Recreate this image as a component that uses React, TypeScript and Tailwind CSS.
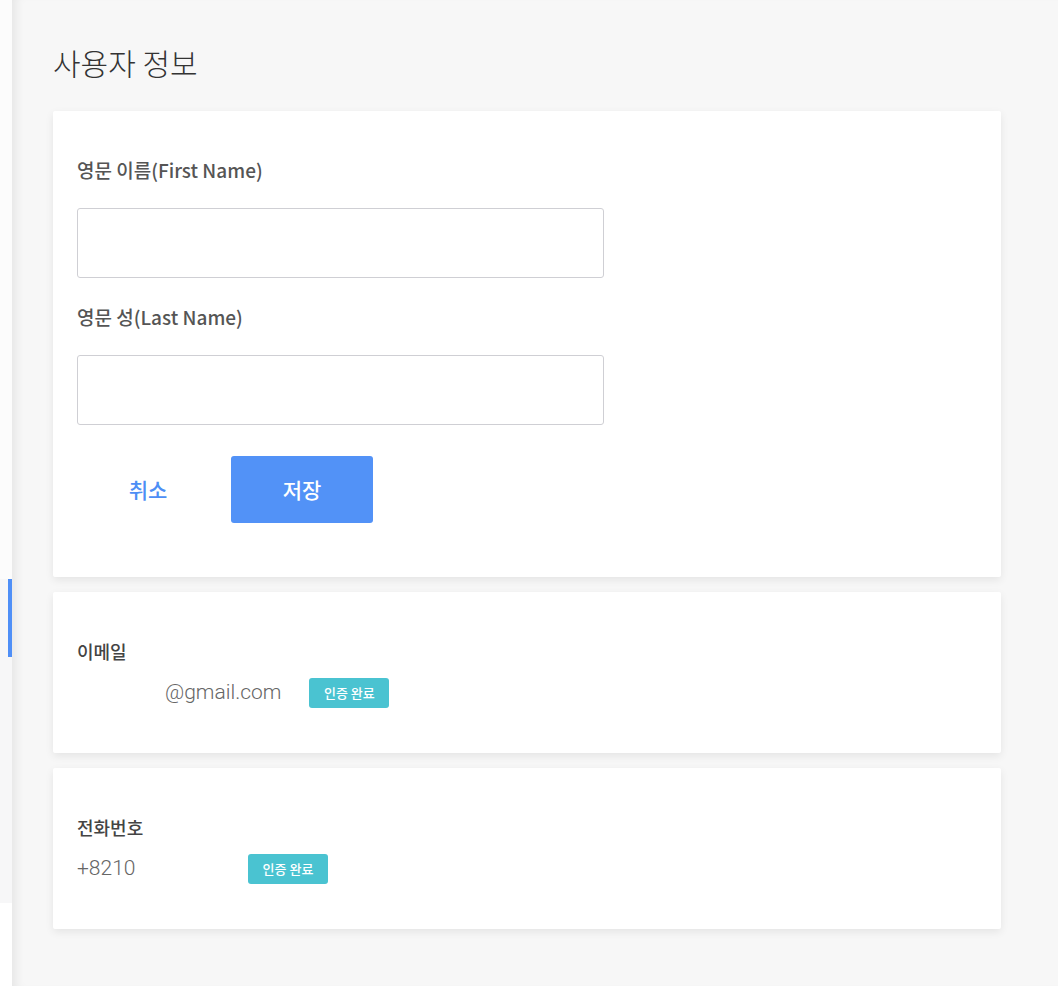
import React from "react";

const ko = "font-['Noto_Sans_CJK_KR','Noto_Sans',sans-serif]";
const roboto = "font-['Roboto','Noto_Sans_CJK_KR',sans-serif]";

function Badge() {
  return (
    <span className={`${ko} inline-flex h-[30px] w-[80px] items-center justify-center rounded-[3px] bg-[#4ac3d1] text-[13px] font-medium text-white`}>
      인증 완료
    </span>
  );
}

function Field({ label }: { label: string }) {
  return (
    <div className="flex flex-col">
      <label className={`${ko} text-[19px] font-medium leading-[24px] text-[#555]`}>{label}</label>
      <input
        type="text"
        className="mt-[26px] h-[70px] w-[527px] rounded-[3px] border border-[#cfcfd4] bg-white px-4 outline-none"
      />
    </div>
  );
}

export default function App() {
  return (
    <div className="flex min-h-[986px] w-full bg-white">
      {/* 사이드바 끝 부분 */}
      <aside className="flex w-3 shrink-0 flex-col">
        <div className="h-[579px] bg-[#fcfcfc]" />
        <div className="flex h-[324px] justify-end bg-[#f7f7f8]">
          <div className="h-[78px] w-1 bg-[#4f8ff7]" />
        </div>
        <div className="flex-1 bg-white" />
      </aside>

      <main className="flex-1 bg-[#f7f7f7] pl-[41px] pr-[57px] pt-[40px] shadow-[inset_10px_0_10px_-6px_rgba(0,0,0,0.07)]">
        <h1 className={`${ko} text-[30px] font-light leading-[44px] text-[#333]`}>사용자 정보</h1>

        <div className="mt-[27px] flex flex-col gap-[15px]">
          {/* 이름 */}
          <section className="rounded-[2px] bg-white px-6 pb-[54px] pt-[47px] shadow-[0_3px_8px_rgba(0,0,0,0.08)]">
            <Field label="영문 이름(First Name)" />
            <div className="mt-[27px]">
              <Field label="영문 성(Last Name)" />
            </div>
            <div className="mt-[31px] flex gap-3">
              <button className={`${ko} h-[67px] w-[142px] rounded-[3px] text-[21px] font-medium text-[#4d8ef5]`}>
                취소
              </button>
              <button className={`${ko} h-[67px] w-[142px] rounded-[3px] bg-[#5292f7] text-[21px] font-medium text-white`}>
                저장
              </button>
            </div>
          </section>

          {/* 이메일 */}
          <section className="rounded-[2px] bg-white px-6 pb-[45px] pt-[46px] shadow-[0_3px_8px_rgba(0,0,0,0.08)]">
            <div className={`${ko} text-[18px] font-medium leading-[26px] text-[#444]`}>이메일</div>
            <div className="mt-[14px] flex h-[30px] items-center">
              <span className={`${roboto} pl-[88px] text-[21px] font-light text-[#666]`}>@gmail.com</span>
              <span className="ml-[28px]">
                <Badge />
              </span>
            </div>
          </section>

          {/* 전화번호 */}
          <section className="rounded-[2px] bg-white px-6 pb-[45px] pt-[46px] shadow-[0_3px_8px_rgba(0,0,0,0.08)]">
            <div className={`${ko} text-[18px] font-medium leading-[26px] text-[#444]`}>전화번호</div>
            <div className="mt-[14px] flex h-[30px] items-center">
              <span className={`${roboto} w-[171px] text-[21px] font-light text-[#666]`}>+8210</span>
              <Badge />
            </div>
          </section>
        </div>
      </main>
    </div>
  );
}
